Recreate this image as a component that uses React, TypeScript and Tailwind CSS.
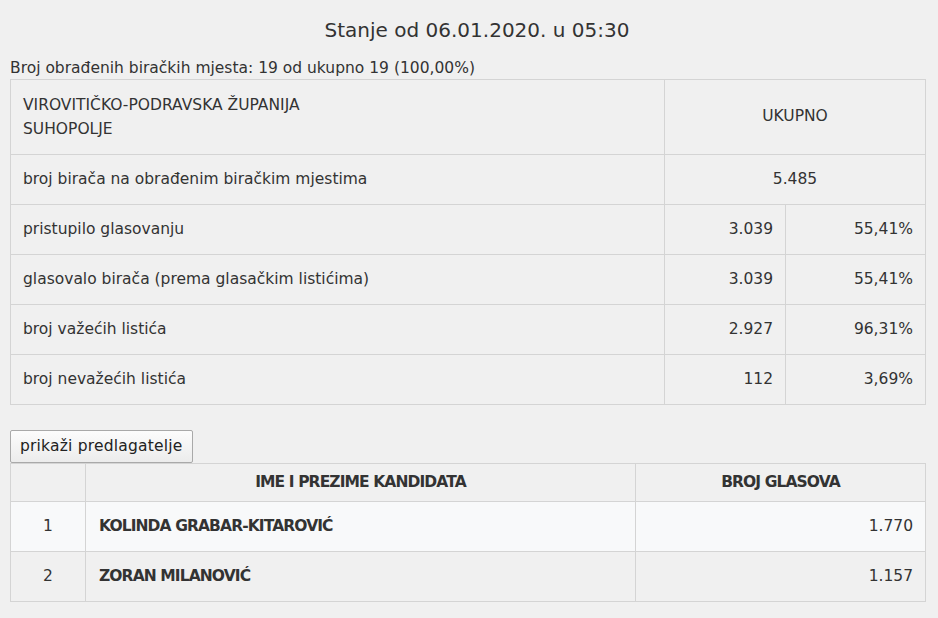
import React from "react";

const rows1 = [
  { label: "pristupilo glasovanju", n: "3.039", p: "55,41%" },
  { label: "glasovalo birača (prema glasačkim listićima)", n: "3.039", p: "55,41%" },
  { label: "broj važećih listića", n: "2.927", p: "96,31%" },
  { label: "broj nevažećih listića", n: "112", p: "3,69%" },
];

const cands = [
  { i: "1", name: "KOLINDA GRABAR-KITAROVIĆ", v: "1.770", bg: "bg-[#f8f9fa]" },
  { i: "2", name: "ZORAN MILANOVIĆ", v: "1.157", bg: "bg-[#f0f0f0]" },
];

export default function App() {
  return (
    <div className="min-h-screen bg-[#f0f0f0] text-[#333] text-[15.5px] font-['DejaVu_Sans',sans-serif]">
      <div className="ml-[10px] w-[915px]">
        <div className="h-[57px] flex items-center justify-center pl-[19px] pt-[3px] text-[20px] text-[#333]">
          Stanje od 06.01.2020. u 05:30
        </div>
        <div className="h-[22px] flex items-center text-[15.5px] leading-[22px]">
          Broj obrađenih biračkih mjesta: 19 od ukupno 19 (100,00%)
        </div>
        <table className="w-[915px] border-collapse table-fixed">
          <colgroup>
            <col className="w-[654px]" />
            <col className="w-[121px]" />
            <col className="w-[140px]" />
          </colgroup>
          <tbody>
            <tr className="h-[75px]">
              <td className="border border-[#d4d4d4] px-[12px] leading-[24px] align-middle">
                VIROVITIČKO-PODRAVSKA ŽUPANIJA
                <br />
                SUHOPOLJE
              </td>
              <td colSpan={2} className="border border-[#d4d4d4] text-center align-middle">
                UKUPNO
              </td>
            </tr>
            <tr className="h-[50px]">
              <td className="border border-[#d4d4d4] px-[12px] align-middle">broj birača na obrađenim biračkim mjestima</td>
              <td colSpan={2} className="border border-[#d4d4d4] text-center align-middle">
                5.485
              </td>
            </tr>
            {rows1.map((r) => (
              <tr key={r.label} className="h-[50px]">
                <td className="border border-[#d4d4d4] px-[12px] align-middle">{r.label}</td>
                <td className="border border-[#d4d4d4] pr-[12px] text-right align-middle">{r.n}</td>
                <td className="border border-[#d4d4d4] pr-[12px] text-right align-middle">{r.p}</td>
              </tr>
            ))}
          </tbody>
        </table>
        <div className="mt-[25px] flex">
          <button className="h-[33px] w-[183px] pl-[9px] text-left border border-[#a9a9a9] rounded-[2px] bg-gradient-to-b from-[#fcfcfc] to-[#ececec] text-[#222] text-[15.5px] tracking-[0.2px] leading-none">
            prikaži predlagatelje
          </button>
        </div>
        <table className="w-[915px] border-collapse table-fixed">
          <colgroup>
            <col className="w-[75px]" />
            <col className="w-[550px]" />
            <col className="w-[290px]" />
          </colgroup>
          <tbody>
            <tr className="h-[38px] font-bold">
              <td className="border border-[#d4d4d4]"></td>
              <td className="border border-[#d4d4d4] text-center tracking-[-0.9px]">IME I PREZIME KANDIDATA</td>
              <td className="border border-[#d4d4d4] text-center tracking-[-0.9px]">BROJ GLASOVA</td>
            </tr>
            {cands.map((c) => (
              <tr key={c.i} className={`h-[50px] ${c.bg}`}>
                <td className="border border-[#d4d4d4] text-center align-middle">{c.i}</td>
                <td className="border border-[#d4d4d4] px-[13px] font-bold tracking-[-0.9px] align-middle">{c.name}</td>
                <td className="border border-[#d4d4d4] pr-[12px] text-right align-middle">{c.v}</td>
              </tr>
            ))}
          </tbody>
        </table>
      </div>
    </div>
  );
}
